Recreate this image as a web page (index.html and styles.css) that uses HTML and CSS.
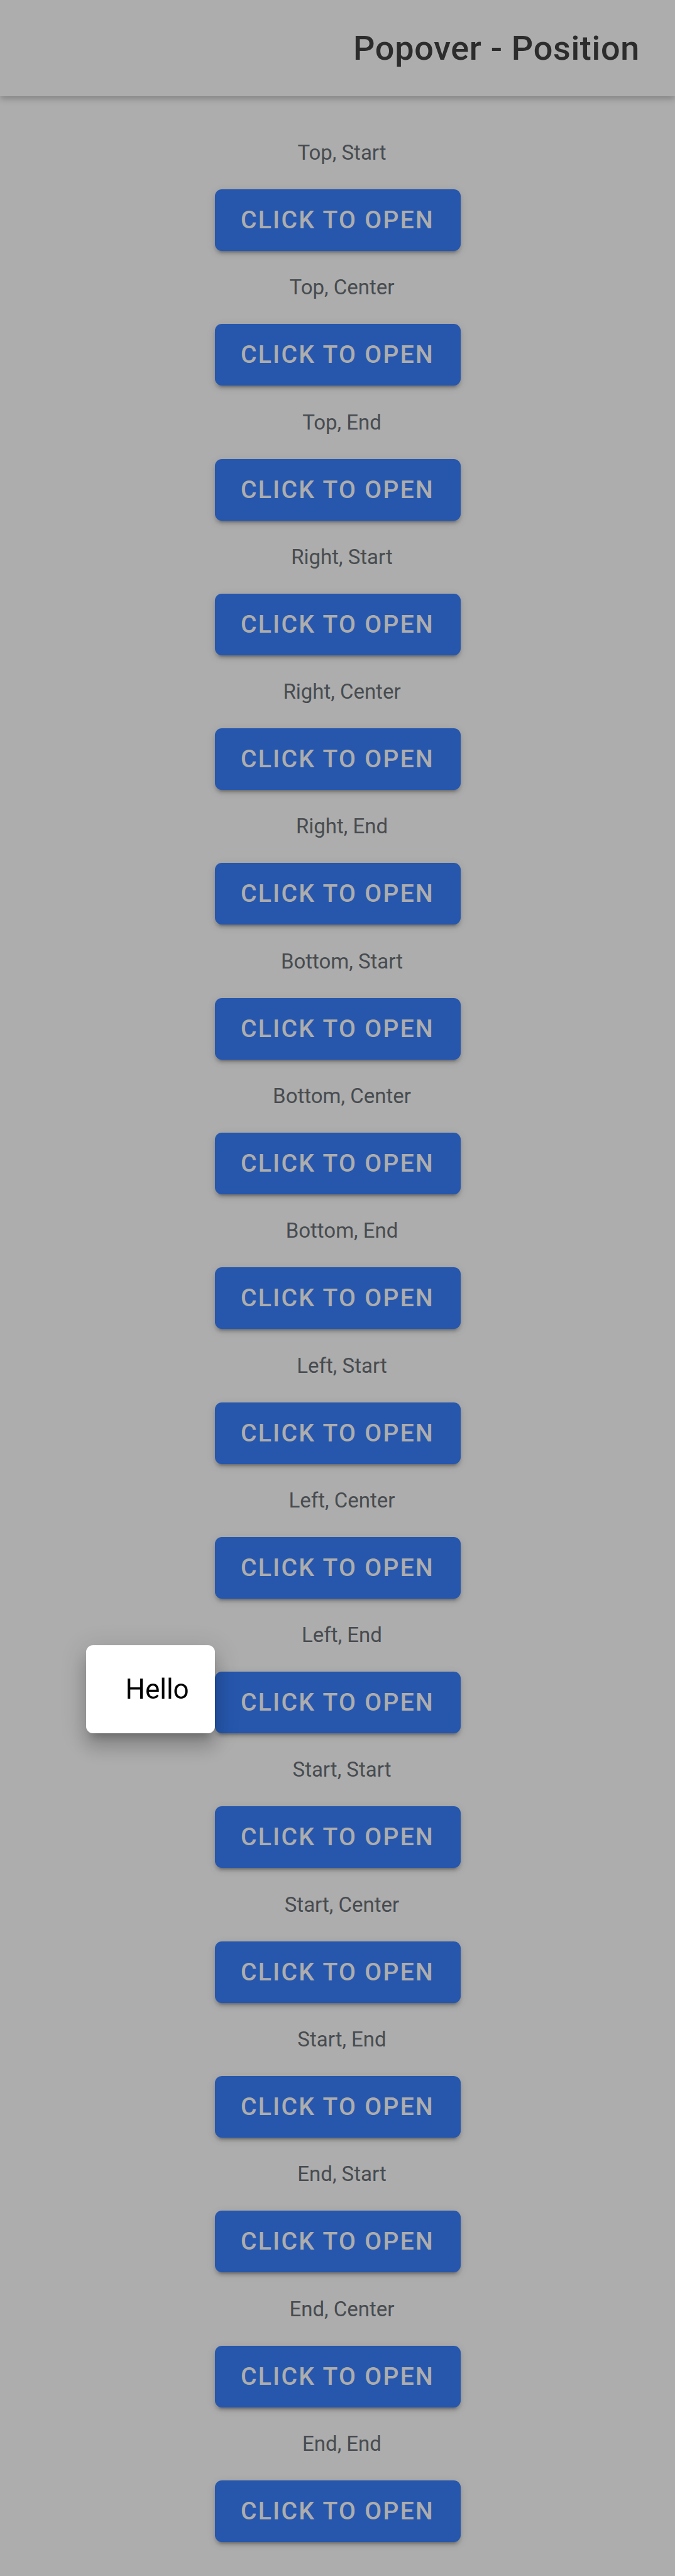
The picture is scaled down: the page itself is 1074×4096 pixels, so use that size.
FILE: index.html
```html
<!DOCTYPE html>
<html lang="en">
<head>
<meta charset="utf-8">
<title>Popover - Position</title>
<link rel="stylesheet" href="styles.css">
</head>
<body>
<header class="toolbar"><h1 class="title">Popover - Position</h1></header>
<main class="content">
<section class="item"><p class="label" id="l1">Top, Start</p><div class="anchor"><button class="button" aria-describedby="l1">CLICK TO OPEN</button></div></section>
<section class="item"><p class="label" id="l2">Top, Center</p><div class="anchor"><button class="button" aria-describedby="l2">CLICK TO OPEN</button></div></section>
<section class="item"><p class="label" id="l3">Top, End</p><div class="anchor"><button class="button" aria-describedby="l3">CLICK TO OPEN</button></div></section>
<section class="item"><p class="label" id="l4">Right, Start</p><div class="anchor"><button class="button" aria-describedby="l4">CLICK TO OPEN</button></div></section>
<section class="item"><p class="label" id="l5">Right, Center</p><div class="anchor"><button class="button" aria-describedby="l5">CLICK TO OPEN</button></div></section>
<section class="item"><p class="label" id="l6">Right, End</p><div class="anchor"><button class="button" aria-describedby="l6">CLICK TO OPEN</button></div></section>
<section class="item"><p class="label" id="l7">Bottom, Start</p><div class="anchor"><button class="button" aria-describedby="l7">CLICK TO OPEN</button></div></section>
<section class="item"><p class="label" id="l8">Bottom, Center</p><div class="anchor"><button class="button" aria-describedby="l8">CLICK TO OPEN</button></div></section>
<section class="item"><p class="label" id="l9">Bottom, End</p><div class="anchor"><button class="button" aria-describedby="l9">CLICK TO OPEN</button></div></section>
<section class="item"><p class="label" id="l10">Left, Start</p><div class="anchor"><button class="button" aria-describedby="l10">CLICK TO OPEN</button></div></section>
<section class="item"><p class="label" id="l11">Left, Center</p><div class="anchor"><button class="button" aria-describedby="l11">CLICK TO OPEN</button></div></section>
<section class="item"><p class="label" id="l12">Left, End</p><div class="anchor"><button class="button" aria-describedby="l12">CLICK TO OPEN</button><div class="popover" role="dialog">Hello</div></div></section>
<section class="item"><p class="label" id="l13">Start, Start</p><div class="anchor"><button class="button" aria-describedby="l13">CLICK TO OPEN</button></div></section>
<section class="item"><p class="label" id="l14">Start, Center</p><div class="anchor"><button class="button" aria-describedby="l14">CLICK TO OPEN</button></div></section>
<section class="item"><p class="label" id="l15">Start, End</p><div class="anchor"><button class="button" aria-describedby="l15">CLICK TO OPEN</button></div></section>
<section class="item"><p class="label" id="l16">End, Start</p><div class="anchor"><button class="button" aria-describedby="l16">CLICK TO OPEN</button></div></section>
<section class="item"><p class="label" id="l17">End, Center</p><div class="anchor"><button class="button" aria-describedby="l17">CLICK TO OPEN</button></div></section>
<section class="item"><p class="label" id="l18">End, End</p><div class="anchor"><button class="button" aria-describedby="l18">CLICK TO OPEN</button></div></section>
</main>
<div class="backdrop"></div>
</body>
</html>
```
FILE: styles.css
```css
* { box-sizing: border-box; }
body {
  margin: 0;
  min-height: 100vh;
  display: flex;
  flex-direction: column;
  background: #fff;
  font-family: Roboto, "Liberation Sans", sans-serif;
}
.toolbar {
  height: 153px;
  padding: 0 56px;
  display: flex;
  align-items: center;
  justify-content: flex-end;
  box-shadow: 0 4px 10px rgba(0, 0, 0, .25);
}
.title {
  margin: 0;
  color: #424242;
  font-size: 54px;
  font-weight: 500;
  letter-spacing: .0125em;
}
.content {
  flex: 1;
  padding: 68px 16px 54px;
  display: flex;
  flex-direction: column;
  justify-content: space-between;
}
.item {
  display: flex;
  flex-direction: column;
  align-items: center;
  gap: 36px;
}
.label {
  margin: 0;
  padding-left: 14px;
  color: #6b7176;
  font-size: 33px;
  line-height: 44px;
}
.anchor { position: relative; }
.button {
  display: block;
  min-width: 391px;
  height: 98px;
  padding: 0 41px;
  border: 0;
  border-radius: 11px;
  background: #3880ff;
  color: #fff;
  font: 500 39px Roboto, "Liberation Sans", sans-serif;
  letter-spacing: .06em;
  white-space: nowrap;
  box-shadow: 0 8px 3px -6px rgba(0, 0, 0, .2), 0 5px 5px rgba(0, 0, 0, .14), 0 3px 14px rgba(0, 0, 0, .12);
}
.backdrop {
  position: fixed;
  inset: 0;
  z-index: 1;
  background: rgba(0, 0, 0, .32);
}
.popover {
  position: absolute;
  right: 100%;
  bottom: 0;
  z-index: 2;
  width: 205px;
  padding: 44px 42px 44px 63px;
  border-radius: 11px;
  background: #fff;
  color: #000;
  font-size: 44px;
  line-height: 52px;
  box-shadow: 0 14px 14px -8px rgba(0, 0, 0, .2), 0 22px 28px 3px rgba(0, 0, 0, .14), 0 8px 38px 6px rgba(0, 0, 0, .12);
}
```
